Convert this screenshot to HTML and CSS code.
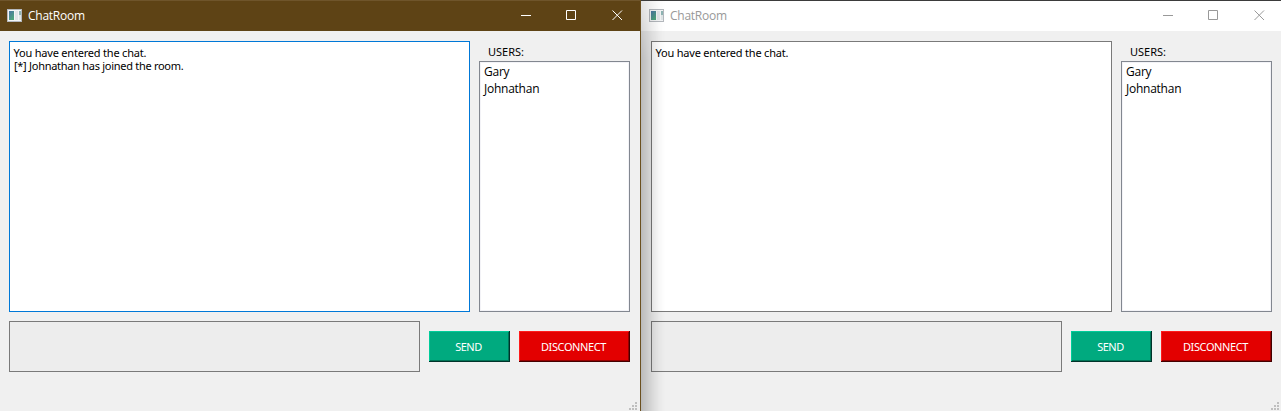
FILE: index.html
```html
<!DOCTYPE html>
<html lang="en">
<head>
<meta charset="utf-8">
<title>ChatRoom</title>
<link rel="stylesheet" href="styles.css">
</head>
<body>
<svg width="0" height="0" class="defs">
  <defs>
    <linearGradient id="pane" x1="0" y1="0" x2="0.6" y2="1">
      <stop offset="0" stop-color="#4a74a4"/><stop offset="1" stop-color="#4fa57c"/>
    </linearGradient>
    <symbol id="app" viewBox="0 0 15 13">
      <rect width="15" height="13" fill="#b4b8bd"/>
      <rect x="1" y="1" width="13" height="11" fill="#f4f5f6"/>
      <rect x="2" y="2" width="5" height="9" fill="url(#pane)"/>
      <rect x="8" y="2" width="3" height="9" fill="#e2e5e8"/>
      <rect x="12" y="2" width="2" height="4" fill="#8fb5b4"/>
      <rect x="12" y="6" width="2" height="5" fill="#dfe5e6"/>
    </symbol>
    <symbol id="grip" viewBox="0 0 8 8">
      <path fill="#bfbfbf" d="M6 0h2v2H6zM3 3h2v2H3zM6 3h2v2H6zM0 6h2v2H0zM3 6h2v2H3zM6 6h2v2H6z"/>
    </symbol>
  </defs>
</svg>
<main class="desktop">
  <section class="window active">
    <header class="titlebar">
      <svg class="app-icon"><use href="#app"/></svg>
      <h1 class="title">ChatRoom</h1>
      <svg class="controls" viewBox="0 0 102 11"><path d="M0 5.500h10M45.500 .5h9v9h-9zM91.500 .5l9.500 9.500M101 .5l-9.500 9.500"/></svg>
    </header>
    <div class="content">
      <div class="upper">
        <div class="log"><p class="line">You have entered the chat.</p><p class="line joined">[*] Johnathan has joined the room.</p></div>
        <aside class="users">
          <h2 class="label">USERS:</h2>
          <ul class="list"><li>Gary</li><li>Johnathan</li></ul>
        </aside>
      </div>
      <div class="lower">
        <div class="entry"></div>
        <button class="button send"><span>SEND</span></button>
        <button class="button disconnect"><span>DISCONNECT</span></button>
      </div>
    </div>
    <svg class="grip"><use href="#grip"/></svg>
  </section>
  <section class="window inactive">
    <header class="titlebar">
      <svg class="app-icon"><use href="#app"/></svg>
      <h1 class="title">ChatRoom</h1>
      <svg class="controls" viewBox="0 0 102 11"><path d="M0 5.500h10M45.500 .5h9v9h-9zM91.500 .5l9.500 9.500M101 .5l-9.500 9.500"/></svg>
    </header>
    <div class="content">
      <div class="upper">
        <div class="log"><p class="line">You have entered the chat.</p></div>
        <aside class="users">
          <h2 class="label">USERS:</h2>
          <ul class="list"><li>Gary</li><li>Johnathan</li></ul>
        </aside>
      </div>
      <div class="lower">
        <div class="entry"></div>
        <button class="button send"><span>SEND</span></button>
        <button class="button disconnect"><span>DISCONNECT</span></button>
      </div>
    </div>
    <svg class="grip"><use href="#grip"/></svg>
  </section>
</main>
</body>
</html>
```
FILE: styles.css
```css
* { box-sizing: border-box; margin: 0; padding: 0; }
body { width: 1281px; height: 411px; overflow: hidden; font-family: "Noto Sans", sans-serif; color: #000; }
.defs { position: absolute; }
.desktop { display: grid; grid-template-columns: 641px 640px; height: 411px; }
.window { position: relative; display: flex; flex-direction: column; background: #f0f0f0; }
.active { border-right: 1px solid #6b5020; }
.titlebar { display: flex; align-items: center; height: 31px; padding: 0 17px 0 7px; border-top: 1px solid #6f552b; background: #5e4315; color: #fff; }
.inactive .titlebar { padding: 0 16px 0 8px; border-top-color: #3b3b3b; background: #fff; color: #999; }
.app-icon { width: 15px; height: 13px; margin-top: -1px; }
.inactive .app-icon { margin-top: -2px; }
.title { flex: 1; margin-left: 6px; font: 400 12px/16px "Open Sans", sans-serif; letter-spacing: -.25px; white-space: nowrap; }
.controls { width: 102px; height: 11px; margin-top: -1px; fill: none; stroke: currentColor; stroke-width: 1; }
.content { display: flex; flex-direction: column; gap: 9px; padding: 10px 10px 0 9px; }
.inactive .content { padding: 10px 9px 0 10px; }
.upper { display: flex; gap: 9px; height: 271px; }
.log { width: 461px; padding: 4px 3.5px; border: 1px solid #7a7a7a; background: #fff; }
.active .log { border-color: #0078d7; }
.line { font-size: 11px; line-height: 13px; letter-spacing: -.2px; white-space: nowrap; }
.joined { padding-left: .5px; letter-spacing: -.28px; }
.users { display: flex; flex-direction: column; width: 151px; }
.label { height: 20px; padding: 3px 0 0 9px; font-size: 11px; font-weight: 400; line-height: 15px; }
.list { flex: 1; padding: 1px 4px; border: 1px solid #828790; background: #fff; box-shadow: inset 0 0 0 1px #f3f3f7; list-style: none; font: 12px/17px "Open Sans", sans-serif; letter-spacing: -.25px; }
.lower { display: flex; align-items: center; gap: 9px; height: 51px; }
.entry { width: 411px; height: 51px; border: 1px solid #7a7a7a; background: #ededed; }
.button { height: 31px; padding-right: 2px; border: 0; color: #fff; font: 11px/15px "Noto Sans", sans-serif; letter-spacing: -.4px; white-space: nowrap; }
.send { width: 81px; background: #00aa7f; letter-spacing: -.5px; box-shadow: inset -1px -1px #00332a, inset 1px 1px #00cc99, inset -2px -2px #007457; }
.disconnect { width: 111px; background: #e30000; box-shadow: inset -1px -1px #440000, inset 1px 1px #ff1b1b, inset -2px -2px #970000; }
.grip { position: absolute; right: 3px; bottom: 1px; width: 8px; height: 8px; }
.inactive .grip { right: 2px; }
.inactive::before { content: ""; position: absolute; z-index: 1; inset: 1px auto 0 0; width: 24px; background: linear-gradient(90deg, rgba(0,0,0,.22), rgba(0,0,0,.11) 42%, rgba(0,0,0,.03) 75%, transparent); -webkit-mask-image: linear-gradient(rgba(0,0,0,.5), #000 60px); mask-image: linear-gradient(rgba(0,0,0,.5), #000 60px); }
```
